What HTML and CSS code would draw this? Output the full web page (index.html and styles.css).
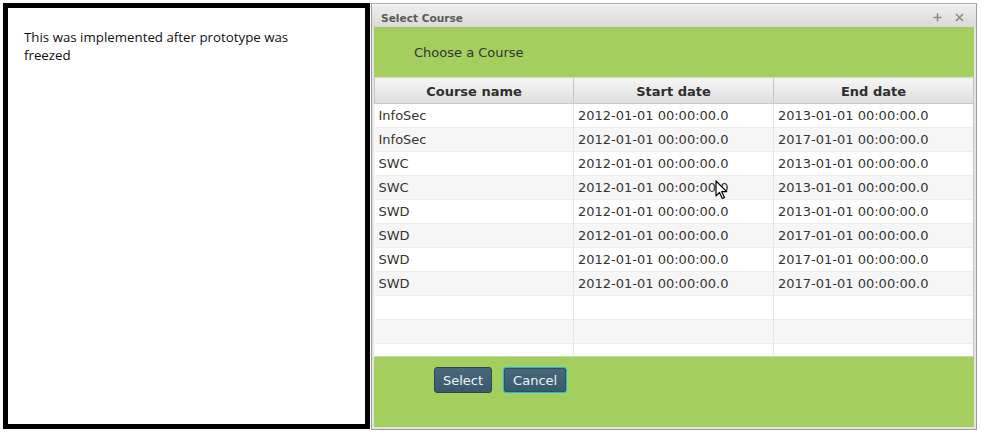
FILE: index.html
```html
<!DOCTYPE html>
<html>
<head>
<meta charset="utf-8">
<link rel="stylesheet" href="styles.css">
</head>
<body>
<div class="page">
  <div class="note">
    <p>This was implemented after prototype was<br>freezed</p>
  </div>
  <div class="dialog">
    <div class="titlebar">
      <span class="title">Select Course</span>
      <span class="tools">
        <svg width="9" height="9" viewBox="0 0 9 9"><path d="M4.5 0.5v8M0.5 4.5h8" stroke="#8a8a8a" stroke-width="1.6"/></svg>
        <svg width="9" height="9" viewBox="0 0 9 9"><path d="M1 1l7 7M8 1l-7 7" stroke="#8a8a8a" stroke-width="1.6"/></svg>
      </span>
    </div>
    <div class="body">
      <div class="banner">Choose a Course</div>
      <div class="tablewrap">
        <table class="grid">
          <thead>
            <tr><th>Course name</th><th>Start date</th><th>End date</th></tr>
          </thead>
          <tbody>
            <tr><td>InfoSec</td><td>2012-01-01 00:00:00.0</td><td>2013-01-01 00:00:00.0</td></tr>
            <tr><td>InfoSec</td><td>2012-01-01 00:00:00.0</td><td>2017-01-01 00:00:00.0</td></tr>
            <tr><td>SWC</td><td>2012-01-01 00:00:00.0</td><td>2013-01-01 00:00:00.0</td></tr>
            <tr><td>SWC</td><td>2012-01-01 00:00:00.0</td><td>2013-01-01 00:00:00.0</td></tr>
            <tr><td>SWD</td><td>2012-01-01 00:00:00.0</td><td>2013-01-01 00:00:00.0</td></tr>
            <tr><td>SWD</td><td>2012-01-01 00:00:00.0</td><td>2017-01-01 00:00:00.0</td></tr>
            <tr><td>SWD</td><td>2012-01-01 00:00:00.0</td><td>2017-01-01 00:00:00.0</td></tr>
            <tr><td>SWD</td><td>2012-01-01 00:00:00.0</td><td>2017-01-01 00:00:00.0</td></tr>
            <tr><td></td><td></td><td></td></tr>
            <tr><td></td><td></td><td></td></tr>
            <tr><td></td><td></td><td></td></tr>
          </tbody>
        </table>
      </div>
      <div class="footer">
        <button class="btn">Select</button>
        <button class="btn focus">Cancel</button>
      </div>
    </div>
    <svg class="cursor" width="13" height="20" viewBox="0 0 13 20"><path d="M1 1v15l3.5-3.5 2.8 6 2.2-1-2.8-5.8h5z" fill="#fff" stroke="#000" stroke-width="1.2" stroke-linejoin="round"/></svg>
  </div>
</div>
</body>
</html>
```

FILE: styles.css
```css
* { box-sizing: border-box; }
html, body { margin: 0; padding: 0; background: #fff; }
.page {
  display: flex;
  align-items: flex-start;
  padding: 3px 0 0 3px;
  gap: 1px;
}
.note {
  width: 367px;
  height: 426px;
  border: 5px solid #000;
  background: #fff;
  padding: 20px 0 0 16px;
}
.note p {
  margin: 0;
  font-family: "Open Sans", sans-serif;
  font-size: 13.3px;
  line-height: 18px;
  color: #111;
}
.dialog {
  position: relative;
  width: 606px;
  height: 427px;
  border: 1px solid #9c9c9c;
  border-top-color: #b0b0b0;
  background: #e4e4e4;
  display: flex;
  flex-direction: column;
  font-family: "DejaVu Sans", sans-serif;
}
.titlebar {
  height: 23px;
  display: flex;
  align-items: center;
  justify-content: space-between;
  padding: 3px 12px 0 9px;
  background: linear-gradient(#eeeeee, #dadada);
  border-top: 1px solid #f8f8f8;
}
.title {
  font-size: 10.6px;
  font-weight: bold;
  color: #5b5b5b;
}
.tools { display: flex; gap: 13px; align-items: center; }
.body {
  flex: 1;
  display: flex;
  flex-direction: column;
  margin: 0 2px 2px 2px;
}
.banner {
  height: 50px;
  background: #a4cf5f;
  padding-left: 40px;
  display: flex;
  align-items: center;
  font-size: 13px;
  color: #333;
}
.tablewrap {
  height: 279px;
  overflow: hidden;
  background: #fff;
  border-right: 1px solid #c4c4c4;
}
.grid {
  width: 600px;
  border-collapse: collapse;
  table-layout: fixed;
  font-size: 13px;
  color: #333;
}
.grid th:nth-child(1), .grid td:nth-child(1) { width: 199px; }
.grid th:nth-child(2), .grid td:nth-child(2) { width: 200px; }
.grid th {
  height: 26px;
  padding: 2px 0 0 0;
  background: linear-gradient(#f6f6f6, #dedede);
  border: 1px solid #c8c8c8;
  border-top: 1px solid #dcdcdc;
  font-weight: bold;
  font-size: 13px;
  color: #2e2e2e;
  text-align: center;
}
.grid td {
  height: 24px;
  padding: 0 0 0 4px;
  border-left: 1px solid #e6e6e6;
  border-bottom: 1px solid #ececec;
  white-space: nowrap;
  overflow: hidden;
}
.grid td:first-child { border-left: none; }
.grid tbody tr:nth-child(even) td { background: #f6f6f6; }
.footer {
  flex: 1;
  background: #a4cf5f;
  border-top: 1px solid #c6d8b0;
  display: flex;
  align-items: flex-start;
  gap: 11px;
  padding: 10px 0 0 60px;
}
.btn {
  height: 26px;
  padding: 0 8px;
  font-family: "DejaVu Sans", sans-serif;
  font-size: 13px;
  color: #eef3f6;
  background: linear-gradient(#48697c, #395a6c);
  border: 1px solid #2d4654;
  border-radius: 3px;
}
.btn.focus {
  border: 1px solid #22b8e6;
  box-shadow: inset 0 0 0 1px #2f5060;
  padding: 0 9px;
}
.cursor {
  position: absolute;
  left: 343px;
  top: 176px;
}
```
